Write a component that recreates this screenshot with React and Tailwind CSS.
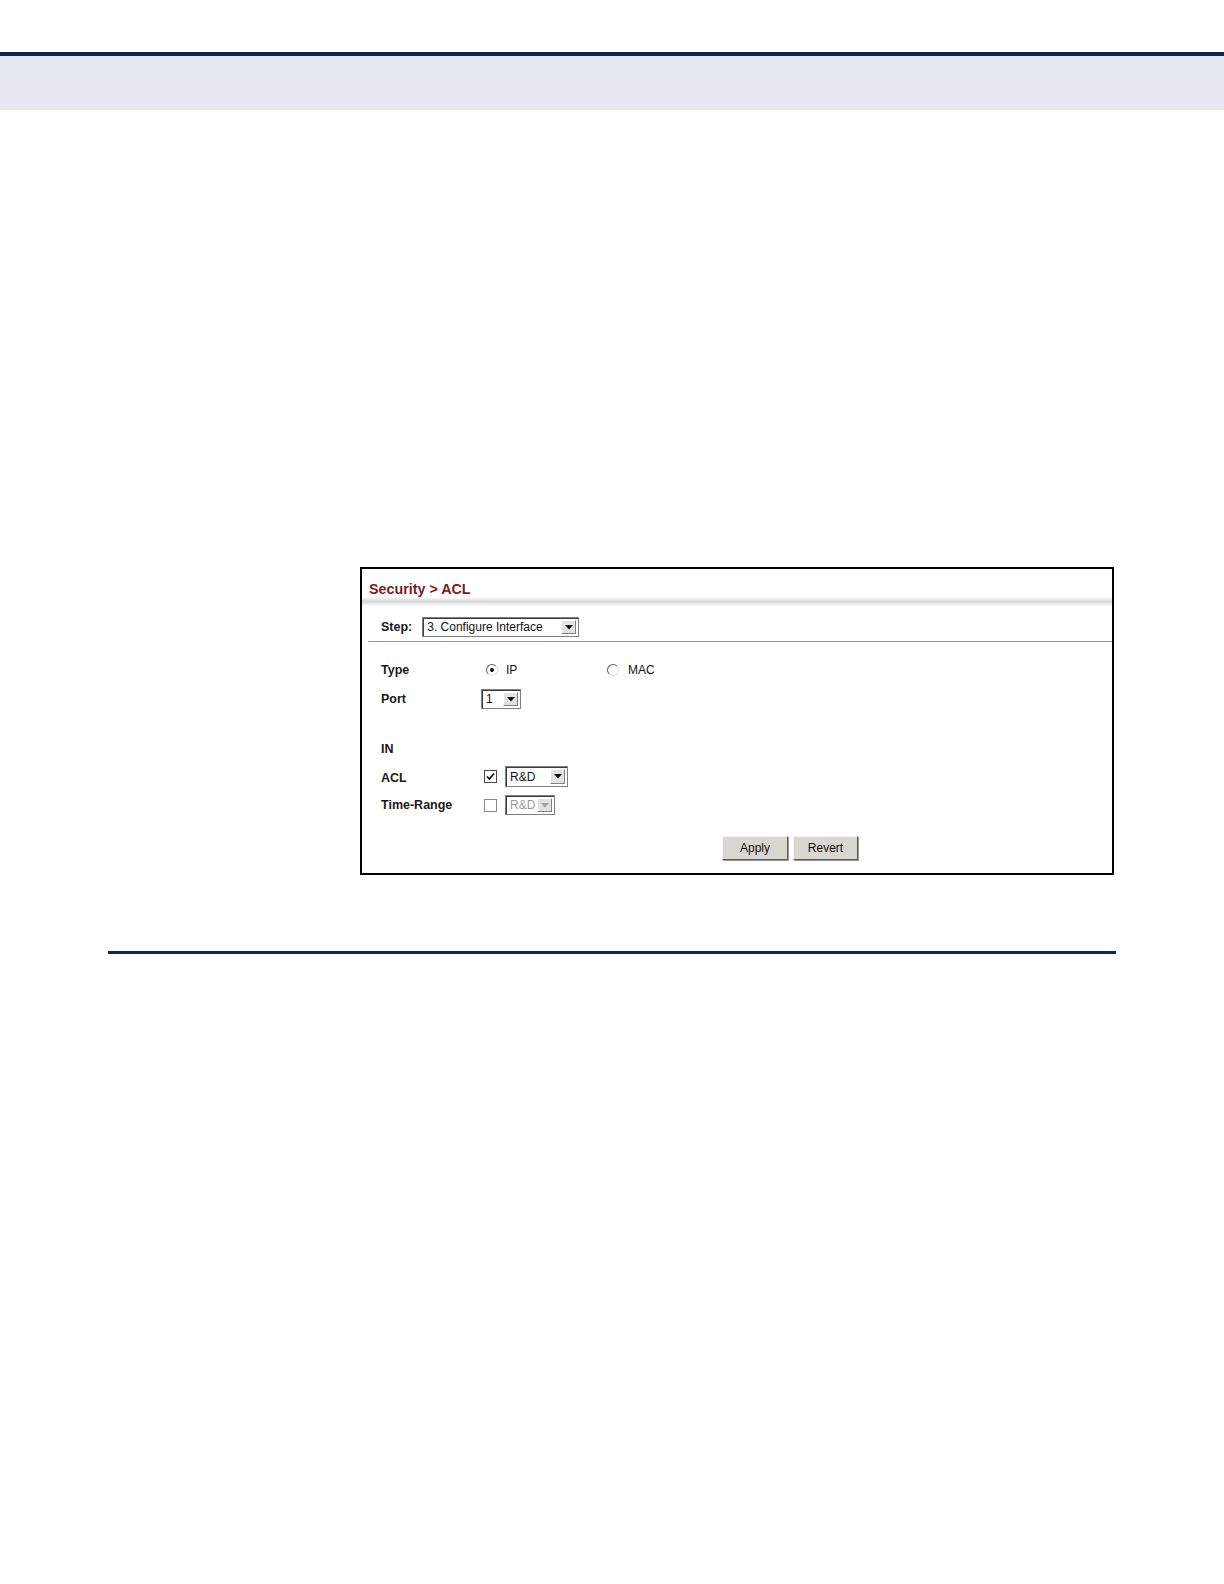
import React from 'react';

const font = { fontFamily: '"Liberation Sans", Arial, sans-serif' };

const Arrow = ({ disabled }) => (
  <div className="w-[15px] h-full flex items-center justify-center bg-[#e2e2e2] border border-t-white border-l-white border-b-[#808080] border-r-[#808080]">
    <svg width="8" height="5" viewBox="0 0 8 5">
      <path d="M0 0 L8 0 L4 4.5 Z" fill={disabled ? '#a0a0a0' : '#111'} />
    </svg>
  </div>
);

const Select = ({ value, width, height = 20, disabled }) => (
  <div
    className="flex items-stretch bg-white border border-[#7f7f7f] shadow-[inset_1px_1px_0_#3c3c3c] p-[2px] pl-[4px]"
    style={{ width, height }}
  >
    <span className={`flex-1 flex items-center text-[12px] leading-none ${disabled ? 'text-[#9a9a9a]' : 'text-[#111]'}`}>
      {value}
    </span>
    <Arrow disabled={disabled} />
  </div>
);

const Radio = ({ checked }) => (
  <div className="w-[12px] h-[12px] rounded-full bg-white border border-t-[#5e5e5e] border-l-[#5e5e5e] border-b-[#e0e0e0] border-r-[#e0e0e0] flex items-center justify-center">
    {checked && <div className="w-[4px] h-[4px] rounded-full bg-[#111]" />}
  </div>
);

const Checkbox = ({ checked }) => (
  <div
    className={`w-[13px] h-[13px] bg-white border flex items-center justify-center ${
      checked ? 'border-[#4a4a4a]' : 'border-[#8a8a8a]'
    }`}
  >
    {checked && (
      <svg width="9" height="9" viewBox="0 0 9 9">
        <path d="M1 4.5 L3.4 7 L8 1.5" fill="none" stroke="#111" strokeWidth="1.8" />
      </svg>
    )}
  </div>
);

const Button = ({ children, width }) => (
  <button
    className="h-[24px] bg-[#d9d7d2] border border-t-[#f4f4f4] border-l-[#f4f4f4] border-b-[#5a5a5a] border-r-[#5a5a5a] shadow-[1px_1px_0_#9a9a9a] text-[12px] text-[#111] leading-none"
    style={{ width }}
  >
    {children}
  </button>
);

const Label = ({ children }) => (
  <div className="w-[100px] text-[12.5px] font-bold text-[#1a1a1a] leading-none">{children}</div>
);

export default function App() {
  return (
    <div className="w-[1224px] h-[1584px] bg-white" style={font}>
      {/* Header band */}
      <div className="h-[52px]" />
      <div className="h-[4px] bg-[#0b2559]" />
      <div className="h-[54px] bg-[#e6e9f1]" />

      {/* Screenshot panel */}
      <div className="mt-[457px] ml-[360px] w-[754px] h-[308px] border-2 border-black">
        <div className="pt-[12px] pl-[7px] h-[28px] text-[14.3px] font-bold leading-[16px] text-[#7d1a1d]">
          Security &gt; ACL
        </div>
        <div className="h-[9px] bg-gradient-to-b from-white via-[#d6d6d6] to-white" />

        <div className="mt-[11px] pl-[19px] h-[20px] flex items-center">
          <span className="text-[12.5px] font-bold text-[#1a1a1a] mr-[10px]">Step:</span>
          <Select value="3. Configure Interface" width={157} />
        </div>
        <div className="mt-[4px] ml-[6px] h-px bg-[#9a9a9a]" />

        <div className="pl-[19px]">
          <div className="mt-[18px] h-[20px] flex items-center">
            <Label>Type</Label>
            <div className="w-[126px] flex items-center gap-[8px] pl-[5px]">
              <Radio checked />
              <span className="text-[12px] text-[#111]">IP</span>
            </div>
            <div className="flex items-center gap-[9px]">
              <Radio />
              <span className="text-[12px] text-[#111]">MAC</span>
            </div>
          </div>

          <div className="mt-[9px] h-[20px] flex items-center">
            <Label>Port</Label>
            <Select value="1" width={40} />
          </div>

          <div className="mt-[30px] h-[20px] flex items-center">
            <Label>IN</Label>
          </div>

          <div className="mt-[7px] h-[21px] flex items-center">
            <div className="pt-[4px]">
              <Label>ACL</Label>
            </div>
            <div className="pl-[3px] flex items-center gap-[8px]">
              <Checkbox checked />
              <Select value="R&D" width={63} height={21} />
            </div>
          </div>

          <div className="mt-[8px] h-[20px] flex items-center">
            <Label>Time-Range</Label>
            <div className="pl-[3px] flex items-center gap-[8px]">
              <Checkbox />
              <Select value="R&D" width={50} disabled />
            </div>
          </div>

          <div className="mt-[21px] ml-[341px] flex gap-[5px]">
            <Button width={66}>Apply</Button>
            <Button width={65}>Revert</Button>
          </div>
        </div>
      </div>

      {/* Section rule */}
      <div className="mt-[76px] ml-[108px] w-[1008px] h-[3px] bg-[#0b2a5c]" />
    </div>
  );
}
